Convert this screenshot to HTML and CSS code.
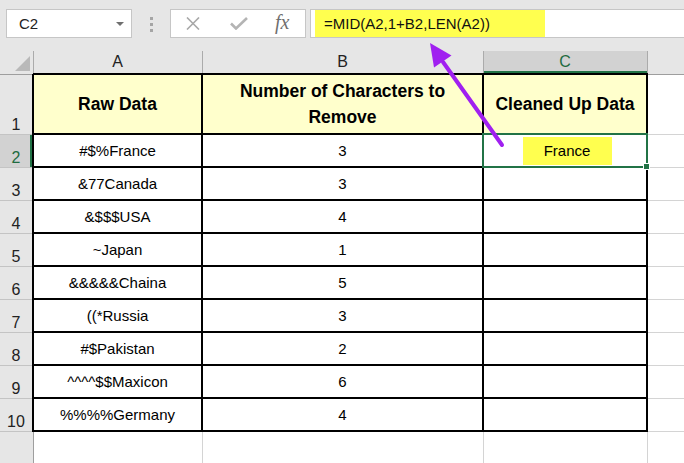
FILE: index.html
```html
<!DOCTYPE html>
<html>
<head>
<meta charset="utf-8">
<link rel="stylesheet" href="styles.css">
</head>
<body>
<div class="app">
  <div class="fbar">
    <div class="namebox">
      <span class="ref">C2</span>
      <svg class="dd" width="8" height="4" viewBox="0 0 8 4"><path d="M0 0H8L4 4Z" fill="#6f6f6f"/></svg>
    </div>
    <div class="grip"><i></i><i></i><i></i></div>
    <div class="fxbox">
      <svg class="ic-x" width="14" height="13" viewBox="0 0 14 13"><path d="M1 0.5L13 12.5M13 0.5L1 12.5" stroke="#a8a8a8" stroke-width="1.6" fill="none"/></svg>
      <svg class="ic-ok" width="18" height="13" viewBox="0 0 18 13"><path d="M1 6.5L6 11.5L17 1" stroke="#b4b4b4" stroke-width="2.6" fill="none"/></svg>
      <span class="fx">fx</span>
    </div>
    <div class="formula"><span class="hl">=MID(A2,1+B2,LEN(A2))</span></div>
  </div>

  <table class="sheet">
    <colgroup>
      <col class="c-rh"><col class="c-a"><col class="c-b"><col class="c-c"><col class="c-d">
    </colgroup>
    <tr class="r-head">
      <th class="corner"><span class="tri"></span></th>
      <th class="colh">A</th>
      <th class="colh">B</th>
      <th class="colh sel">C</th>
      <th class="colh"></th>
    </tr>
    <tr class="r-title">
      <th class="rowh">1</th>
      <td class="t title">Raw Data</td>
      <td class="t title">Number of Characters to<br>Remove</td>
      <td class="t title">Cleaned Up Data</td>
      <td class="g"></td>
    </tr>
    <tr class="r">
      <th class="rowh sel">2</th>
      <td class="t">#$%France</td>
      <td class="t">3</td>
      <td class="t active"><span class="mark">France</span><span class="handle"></span></td>
      <td class="g"></td>
    </tr>
    <tr class="r"><th class="rowh">3</th><td class="t">&amp;77Canada</td><td class="t">3</td><td class="t"></td><td class="g"></td></tr>
    <tr class="r"><th class="rowh">4</th><td class="t">&amp;$$$USA</td><td class="t">4</td><td class="t"></td><td class="g"></td></tr>
    <tr class="r"><th class="rowh">5</th><td class="t">~Japan</td><td class="t">1</td><td class="t"></td><td class="g"></td></tr>
    <tr class="r"><th class="rowh">6</th><td class="t">&amp;&amp;&amp;&amp;&amp;Chaina</td><td class="t">5</td><td class="t"></td><td class="g"></td></tr>
    <tr class="r"><th class="rowh">7</th><td class="t">((*Russia</td><td class="t">3</td><td class="t"></td><td class="g"></td></tr>
    <tr class="r"><th class="rowh">8</th><td class="t">#$Pakistan</td><td class="t">2</td><td class="t"></td><td class="g"></td></tr>
    <tr class="r"><th class="rowh">9</th><td class="t">^^^^$$Maxicon</td><td class="t">6</td><td class="t"></td><td class="g"></td></tr>
    <tr class="r"><th class="rowh">10</th><td class="t">%%%%Germany</td><td class="t">4</td><td class="t"></td><td class="g"></td></tr>
    <tr class="r-last"><th class="rowh"></th><td class="g"></td><td class="g"></td><td class="g"></td><td class="g"></td></tr>
  </table>

  <svg class="arrow" width="684" height="463" viewBox="0 0 684 463">
    <line x1="502" y1="145" x2="443" y2="62" stroke="#a020f0" stroke-width="4" stroke-linecap="round"/>
    <path d="M430 43L451.5 55.5L434 67.5Z" fill="#a020f0"/>
  </svg>
</div>
</body>
</html>
```

FILE: styles.css
```css
html, body {
  margin: 0;
  padding: 0;
  background: #ffffff;
}
body {
  width: 684px;
  height: 463px;
  overflow: hidden;
  font-family: "Liberation Sans", Arial, sans-serif;
  color: #000;
}
.app {
  position: relative;
  width: 684px;
  height: 463px;
  overflow: hidden;
}

/* formula bar */
.fbar {
  height: 51px;
  box-sizing: border-box;
  padding-top: 9px;
  background: #e6e6e6;
  display: flex;
  align-items: flex-start;
}
.namebox {
  margin-left: 6px;
  width: 126px;
  height: 29px;
  box-sizing: border-box;
  background: #fff;
  border: 1px solid #c6c6c6;
  display: flex;
  align-items: center;
  padding-left: 12px;
  padding-right: 7px;
  justify-content: space-between;
}
.ref {
  font-size: 15px;
  color: #222;
}
.dd { display: block; }
.grip {
  margin-left: 18px;
  width: 3px;
  padding-top: 8px;
  display: flex;
  flex-direction: column;
  gap: 3px;
}
.grip i {
  display: block;
  width: 3px;
  height: 3px;
  background: #a5a5a5;
}
.fxbox {
  margin-left: 17px;
  width: 136px;
  height: 29px;
  box-sizing: border-box;
  background: #fff;
  border: 1px solid #c6c6c6;
  display: flex;
  align-items: center;
  padding-left: 15px;
}
.ic-x { display: block; }
.ic-ok { display: block; margin-left: 30px; }
.fx {
  margin-left: 27px;
  font-family: "Liberation Serif", "Times New Roman", serif;
  font-style: italic;
  font-size: 20px;
  color: #6f6f6f;
  line-height: 1;
  margin-top: -3px;
}
.formula {
  margin-left: 4px;
  flex: 1;
  height: 29px;
  box-sizing: border-box;
  background: #fff;
  border: 1px solid #c6c6c6;
  border-right: none;
  display: flex;
  align-items: center;
}
.hl {
  margin-left: 4px;
  width: 230px;
  height: 27px;
  box-sizing: border-box;
  background: #ffff4f;
  padding-left: 9px;
  font-size: 15px;
  line-height: 27px;
  color: #111;
}

/* sheet */
.sheet {
  border-collapse: collapse;
  table-layout: fixed;
  width: 727px;
}
.c-rh { width: 33px; }
.c-a { width: 169px; }
.c-b { width: 281px; }
.c-c { width: 164px; }
.c-d { width: 80px; }

.r-head { height: 23px; }
.r-title { height: 60px; }
.r { height: 33px; }
.r-last { height: 40px; }

.sheet th, .sheet td {
  padding: 0;
}
.corner {
  background: #e6e6e6;
  border-right: 1px solid #ababab;
  border-bottom: 1px solid #9e9e9e;
  position: relative;
}
.tri {
  position: absolute;
  right: 3px;
  bottom: 3px;
  width: 0;
  height: 0;
  border-left: 15px solid transparent;
  border-bottom: 15px solid #b9b9b9;
}
.colh {
  background: #e6e6e6;
  border-right: 1px solid #ababab;
  border-bottom: 1px solid #9e9e9e;
  font-weight: normal;
  font-size: 16px;
  color: #222;
  text-align: center;
  vertical-align: middle;
}
.colh.sel {
  background: #d2d2d2;
  color: #1e6b40;
  box-shadow: inset 0 -2px 0 #217346;
}
.rowh {
  background: #e6e6e6;
  border-right: 1px solid #9e9e9e;
  border-bottom: 1px solid #c4c4c4;
  font-weight: normal;
  font-size: 16px;
  color: #222;
  text-align: center;
  vertical-align: bottom;
  padding-bottom: 3px;
  line-height: 18px;
}
.rowh.sel {
  background: #d2d2d2;
  color: #1e6b40;
  box-shadow: inset -2px 0 0 #217346;
}
.t {
  border: 2px solid #000;
  text-align: center;
  vertical-align: middle;
  font-size: 15px;
  background: #fff;
}
.title {
  background: #ffffcc;
  font-weight: bold;
  font-size: 17.5px;
  line-height: 26px;
  padding-top: 3px;
}
.g {
  border: 1px solid #d4d4d4;
  background: #fff;
}
.active {
  position: relative;
  outline: 2px solid #217346;
  outline-offset: -1px;
}
.mark {
  display: inline-block;
  width: 89px;
  height: 28px;
  line-height: 28px;
  background: #ffff4f;
  margin-left: 4px;
}
.handle {
  position: absolute;
  right: -4px;
  bottom: -4px;
  width: 5px;
  height: 5px;
  background: #217346;
  border: 1px solid #fff;
}

.arrow {
  position: absolute;
  left: 0;
  top: 0;
  pointer-events: none;
}
```
